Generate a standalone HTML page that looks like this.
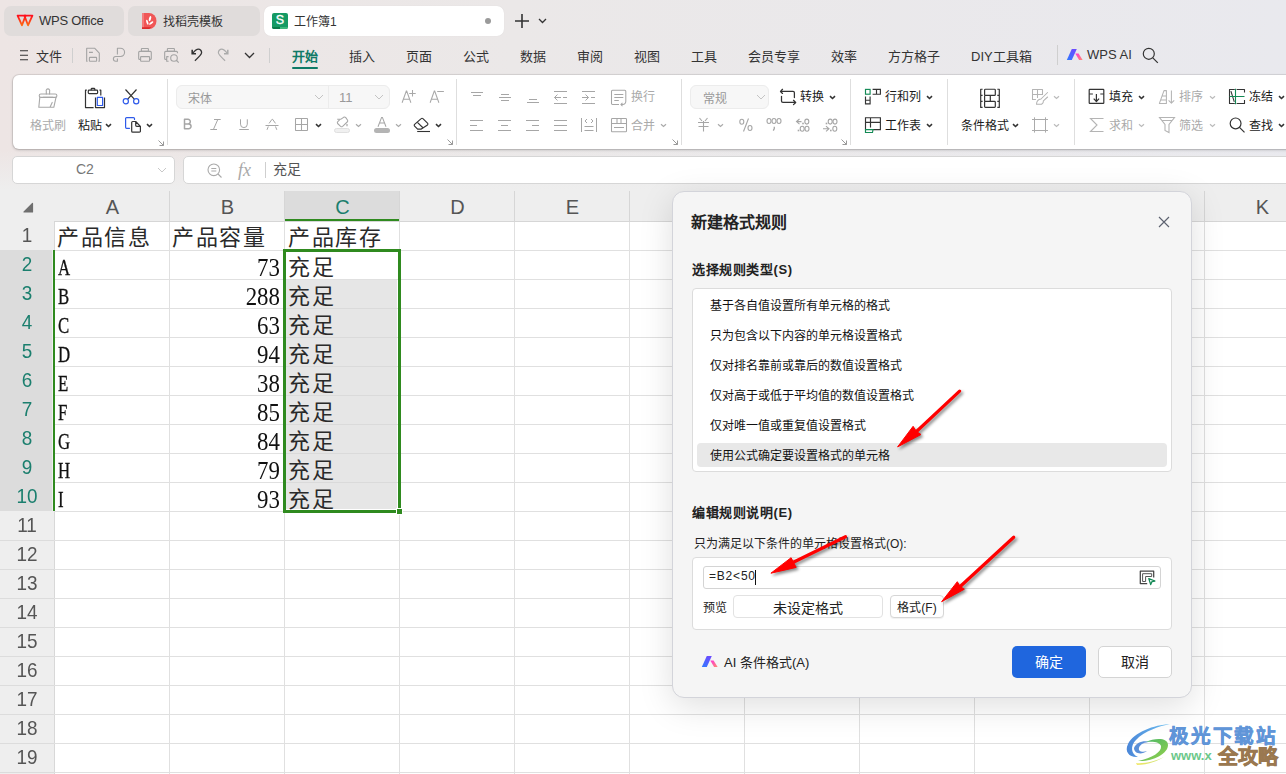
<!DOCTYPE html>
<html lang="zh-CN">
<head>
<meta charset="utf-8">
<style>
*{box-sizing:border-box;margin:0;padding:0}
html,body{width:1286px;height:774px;overflow:hidden}
body{position:relative;font-family:"Liberation Sans",sans-serif;color:#333;background:linear-gradient(90deg,#ede5e4 0%,#ebe8e8 40%,#e9e9ee 100%)}
.a{position:absolute}
.tab{position:absolute;top:6px;height:30px;border-radius:7px;background:#e0dcdb;font-size:13px;color:#333}
.tab span{position:absolute;top:7px;white-space:nowrap}
.menu{position:absolute;top:45.5px;font-size:13px;color:#333;white-space:nowrap}
#ribbon{position:absolute;left:13px;top:75px;width:1290px;height:74px;background:#fff;border-radius:6px;box-shadow:0 0 0 1px rgba(0,0,0,.08),0 1px 3px rgba(0,0,0,.22)}
.sep{position:absolute;top:79px;width:1px;height:66px;background:#dedede}
.lbl{position:absolute;font-size:12px;white-space:nowrap;color:#1a1a1a}
.dis{color:#aaa}
svg{position:absolute;overflow:visible}
#grid{position:absolute;left:0;top:188px;width:1286px;height:586px;background:#fff}
.ch{position:absolute;top:3px;height:30px;background:#eeeeee;border-right:1px solid #dcdcdc;font-size:19px;color:#555;text-align:center;line-height:30px}
.rh{position:absolute;left:0;width:54px;background:#efefef;font-size:19px;color:#555;text-align:center}
.cell{position:absolute;font-family:"Liberation Serif",serif;font-size:22px;color:#111;white-space:nowrap}
.cj{position:absolute;font-size:22px;line-height:29px;letter-spacing:1.5px;color:#2a2a2a;white-space:nowrap}
.lt{position:absolute;font-family:"Liberation Serif",serif;font-size:24px;line-height:29px;color:#111;-webkit-text-stroke:.35px #111;transform:scaleX(.7);transform-origin:0 0}
.num{position:absolute;width:112px;text-align:right;font-family:"Liberation Serif",serif;font-size:26px;line-height:29px;color:#111;transform:scaleX(.88);transform-origin:100% 0;left:169px}
.dl{position:absolute;left:710px;font-size:12px;color:#111;white-space:nowrap}
</style>
</head>
<body>
<!-- tabs -->
<div class="tab" style="left:4px;width:120px"><span style="left:35px;font-size:13px;top:7px;letter-spacing:-.25px">WPS Office</span></div>
<div class="tab" style="left:128px;width:132px"><span style="left:35px;font-size:12px;top:6px">找稻壳模板</span></div>
<div class="tab" style="left:264px;width:240px;background:#fff;box-shadow:0 0 1px rgba(0,0,0,.1)"><span style="left:30px;font-size:12px;top:6px">工作簿1</span></div>

<!-- tab icons -->
<svg style="left:15px;top:13px" width="20" height="15" viewBox="0 0 20 15"><defs><linearGradient id="wg" x1="0" y1="0" x2="0" y2="1"><stop offset="0" stop-color="#ff0f1f"/><stop offset="1" stop-color="#ff6a10"/></linearGradient></defs><g fill="none" stroke="url(#wg)" stroke-width="1.8" stroke-linejoin="round"><path d="M2.6 2.6H10.6L7 12.3Z"/><path d="M9.4 2.6H17.4L13 12.3Z"/></g></svg>
<svg style="left:141px;top:13px" width="16" height="16" viewBox="0 0 16 16"><path d="M1 0h7a7.5 8 0 0 1 0 16H1z" fill="#f05656"/><path d="M1 0h2v16H1z" fill="#f37c7c"/><path d="M1 14.2h9.5a7 7 0 0 1-2.5 1.8H1z" fill="#dc2b2b"/><ellipse cx="6.3" cy="9.2" rx=".95" ry="2.6" transform="rotate(-18 6.3 9.2)" fill="#fff"/><ellipse cx="9" cy="5.6" rx="1.05" ry="2.8" transform="rotate(16 9 5.6)" fill="#fff"/><ellipse cx="10.2" cy="10" rx=".95" ry="2.6" transform="rotate(52 10.2 10)" fill="#fff"/></svg>
<div class="a" style="left:272px;top:13px;width:16px;height:16px;background:#159a64;border-radius:2px;overflow:hidden"><div class="a" style="left:0;top:14px;width:8px;height:2px;background:#0b7a4a"></div><div class="a" style="left:8px;top:14px;width:8px;height:2px;background:#3db77b"></div><div class="a" style="left:0;top:-1px;width:16px;text-align:center;font-size:12.5px;color:#fff;-webkit-text-stroke:.35px #fff;line-height:17px">S</div></div>
<div class="a" style="left:485px;top:18px;width:6px;height:6px;border-radius:3px;background:#9a9a9a"></div>
<svg style="left:514px;top:13px" width="16" height="16" viewBox="0 0 16 16" fill="none" stroke="#333" stroke-width="1.6"><path d="M8 1v14M1 8h14"/></svg>
<svg style="left:538px;top:18px" width="9" height="6" viewBox="0 0 9 6" fill="none" stroke="#333" stroke-width="1.3"><path d="M1 1l3.5 3.5L8 1"/></svg>
<!-- menu icons -->
<svg style="left:19px;top:50px" width="10" height="11" viewBox="0 0 10 11" fill="none" stroke="#333" stroke-width="1.1"><path d="M1 .8h8M1 5.3h8M1 9.8h8"/></svg>
<div class="a" style="left:72px;top:48px;width:1px;height:15px;background:#cfcfcf"></div>
<div class="a" style="left:269px;top:48px;width:1px;height:15px;background:#cfcfcf"></div>
<div class="a" style="left:1057px;top:45px;width:1px;height:20px;background:#cfcfcf"></div>
<svg style="left:84px;top:46px" width="18" height="18" viewBox="0 0 18 18" fill="none" stroke="#a4a4a4" stroke-width="1.1" stroke-linejoin="round"><path d="M3.6 15.3H2.67V2.28H10.8L15.3 7.1V15.3H14.3M5 6.36H8.9"/><rect x="5.4" y="11.4" width="7.2" height="3.9" rx=".5"/></svg>
<svg style="left:111px;top:46px" width="18" height="18" viewBox="0 0 18 18" fill="none" stroke="#a4a4a4" stroke-width="1.1" stroke-linejoin="round"><path d="M6.4 8.5V2.28H9.5A4.08 4.08 0 0 1 9.5 10.44H4.8A2.43 2.43 0 0 0 4.8 15.3H6.4V12.4"/></svg>
<svg style="left:136px;top:46px" width="18" height="18" viewBox="0 0 18 18" fill="none" stroke="#a4a4a4" stroke-width="1.1" stroke-linejoin="round"><rect x="5.4" y="2.5" width="7" height="2.9" rx=".6"/><path d="M4.6 13.4H3.67a1 1 0 0 1-1-1V6.4a1 1 0 0 1 1-1H14.3a1 1 0 0 1 1 1V12.4a1 1 0 0 1-1 1H13.55"/><rect x="4.6" y="10.6" width="8.95" height="4.7" rx=".6"/></svg>
<svg style="left:162px;top:46px" width="18" height="18" viewBox="0 0 18 18" fill="none" stroke="#a4a4a4" stroke-width="1.1" stroke-linejoin="round"><rect x="5.4" y="2.5" width="7" height="2.9" rx=".6"/><path d="M4.3 13.4H3.67a1 1 0 0 1-1-1V6.4a1 1 0 0 1 1-1H14.5a1 1 0 0 1 1 1V7.3M6.6 10.6H4.7V15.3H6.6"/><circle cx="12" cy="12" r="3.3"/><path d="M14.6 14.5L16.7 16.7"/></svg>
<svg style="left:190px;top:47px" width="14" height="15" viewBox="0 0 14 15" fill="none" stroke="#333" stroke-width="1.3" stroke-linejoin="miter"><path d="M2.2 2.8V6.7H6" stroke-width="1.6"/><path d="M2.6 6.4C4.6 4 6.4 2.2 8.3 2.2C10.3 2.2 11.7 3.8 11.6 5.8C11.5 7.4 10.6 8.6 4.9 13.7"/></svg>
<svg style="left:216px;top:47px" width="14" height="15" viewBox="0 0 14 15" fill="none" stroke="#ababab" stroke-width="1.2"><g transform="translate(14 0) scale(-1 1)"><path d="M2.2 2.8V6.7H6" stroke-width="1.5"/><path d="M2.6 6.4C4.6 4 6.4 2.2 8.3 2.2C10.3 2.2 11.7 3.8 11.6 5.8C11.5 7.4 10.6 8.6 4.9 13.7"/></g></svg>
<svg style="left:244px;top:52px" width="11" height="7" viewBox="0 0 11 7" fill="none" stroke="#333" stroke-width="1.3"><path d="M1 1l4.5 4.5L10 1"/></svg>
<svg style="left:1066px;top:48px" width="18" height="13" viewBox="0 0 18 13"><defs><linearGradient id="wai" x1="0" y1="1" x2=".6" y2="0"><stop offset="0" stop-color="#2f7bff"/><stop offset="1" stop-color="#6a4dff"/></linearGradient><linearGradient id="wai2" x1="0" y1="0" x2="1" y2="1"><stop offset="0" stop-color="#ff34d6"/><stop offset="1" stop-color="#ff8a70"/></linearGradient></defs><path d="M.8 12L5.8 1h5L5.8 12z" fill="url(#wai)"/><path d="M9.3 5.6h3.3l4 6.4h-3.5z" fill="url(#wai2)"/></svg>
<svg style="left:1142px;top:47px" width="17" height="17" viewBox="0 0 17 17" fill="none" stroke="#333" stroke-width="1.2"><circle cx="6.8" cy="6.8" r="5.5"/><path d="M10.8 10.8l5 5"/></svg>
<!-- menu -->
<div class="menu" style="left:36px">文件</div>
<div class="menu" style="left:292px;color:#0f7a66;font-weight:bold">开始</div>
<div class="a" style="left:292px;top:67px;width:26px;height:2px;background:#0f7a66;border-radius:1px"></div>
<div class="menu" style="left:349px">插入</div>
<div class="menu" style="left:406px">页面</div>
<div class="menu" style="left:463px">公式</div>
<div class="menu" style="left:520px">数据</div>
<div class="menu" style="left:577px">审阅</div>
<div class="menu" style="left:634px">视图</div>
<div class="menu" style="left:691px">工具</div>
<div class="menu" style="left:748px">会员专享</div>
<div class="menu" style="left:831px">效率</div>
<div class="menu" style="left:888px">方方格子</div>
<div class="menu" style="left:971px">DIY工具箱</div>
<div class="menu" style="left:1087px;top:47px">WPS AI</div>

<!-- ribbon -->
<div id="ribbon"></div>
<!-- clipboard group -->
<svg style="left:36px;top:86px" width="24" height="24" viewBox="0 0 24 24" fill="none" stroke="#a8a8a8" stroke-width="1.1" stroke-linejoin="round" stroke-linecap="round"><path d="M10.3 8V5.4A1.8 1.8 0 1 1 13.6 5.4V8"/><rect x="3.2" y="8" width="17.7" height="3.4" rx="1.7"/><path d="M7.2 11.4H16.8M3.8 11.4L2.8 21.3H17.8L20 11.4M14 21.3L16.2 16.4"/></svg>
<div class="lbl dis" style="left:30px;top:116px">格式刷</div>
<svg style="left:83px;top:86px" width="24" height="24" viewBox="0 0 24 24" fill="none" stroke="#333" stroke-width="1.2" stroke-linejoin="round"><path d="M3.8 4.2H2.5V21.6H10.6M16.5 4.2H17.8V9.5M12.5 11.4V21.6H21.5V11.4"/><rect x="5.3" y="4.2" width="9.3" height="3.4" rx=".8"/><path d="M8.2 4.2V3.2a.8.8 0 0 1 .8-.8h2a.8.8 0 0 1 .8.8v1"/><rect x="14.3" y="11.4" width="5.3" height="8.1" stroke="#2f5bea"/></svg>
<div class="lbl" style="left:78px;top:116px">粘贴</div>
<svg style="left:121px;top:88px" width="20" height="18" viewBox="0 0 20 18" fill="none" stroke-width="1.2">
<path d="M4.5 1.5l9 9.8M15.5 1.5l-9 9.8" stroke="#333"/>
<circle cx="4.8" cy="13.3" r="2.6" stroke="#2f5bea"/><circle cx="15.2" cy="13.3" r="2.6" stroke="#2f5bea"/>
</svg>
<svg style="left:123px;top:116px" width="20" height="18" viewBox="0 0 20 18" fill="none" stroke-width="1.2" stroke-linejoin="round" stroke-linecap="round"><path d="M11.5 3.5V2.6a1 1 0 0 0-1-1H3.6a1 1 0 0 0-1 1V11.3a1 1 0 0 0 1 1H6.5" stroke="#2f5bea"/><path d="M9.7 5.5H12.7L17.4 10.3V15.2a1 1 0 0 1-1 1H9.7a1 1 0 0 1-1-1V6.5a1 1 0 0 1 1-1ZM12.7 5.5V9.3a1 1 0 0 0 1 1H17.4" stroke="#333"/></svg>
<div class="sep" style="left:167px"></div>
<!-- font group -->
<div class="a" style="left:176px;top:85px;width:214px;height:24px;background:#f7f7f7;border:1px solid #ececec;border-radius:6px"></div>
<div class="a" style="left:328px;top:86px;width:1px;height:22px;background:#ececec"></div>
<div class="lbl" style="left:188px;top:89px;color:#999">宋体</div>
<div class="lbl" style="left:339px;top:90px;color:#999;font-size:13px">11</div>
<svg style="left:314px;top:94px" width="10" height="6" viewBox="0 0 10 6" fill="none" stroke="#c4c4c4" stroke-width="1"><path d="M1 1l4 4 4-4"/></svg>
<svg style="left:374px;top:94px" width="10" height="6" viewBox="0 0 10 6" fill="none" stroke="#c4c4c4" stroke-width="1"><path d="M1 1l4 4 4-4"/></svg>
<svg style="left:401px;top:89px" width="16" height="16" viewBox="0 0 16 16" fill="none" stroke="#a8a8a8" stroke-width="1.05"><path d="M1.1 13.7L5.3 2.1h.4L9.9 13.7M2.6 10.3h5.8M8.2 4.5h6.5M11.5 1.1v6.5"/></svg>
<svg style="left:429px;top:89px" width="16" height="16" viewBox="0 0 16 16" fill="none" stroke="#a8a8a8" stroke-width="1.05"><path d="M1.1 13.7L5.3 2.1h.4L9.9 13.7M2.6 10.3h5.8M8.2 2.5h6.7"/></svg>


<svg style="left:105px;top:123px" width="7" height="5" viewBox="0 0 7 5" fill="none" stroke="#333" stroke-width="1.6"><path d="M1 1.2l2.5 2.3L6 1.2"/></svg>
<svg style="left:146px;top:123px" width="7" height="5" viewBox="0 0 7 5" fill="none" stroke="#333" stroke-width="1.6"><path d="M1 1.2l2.5 2.3L6 1.2"/></svg>
<svg style="left:158px;top:140px" width="6" height="6" viewBox="0 0 6 6" fill="none" stroke="#999" stroke-width="1"><path d="M.5 .5l5 5M1.5 5.5h4v-4"/></svg>
<svg style="left:183px;top:118px" width="10" height="13" viewBox="0 0 10 13" fill="none" stroke="#a6a6a6" stroke-width="1.5" stroke-linejoin="round"><path d="M1.5 1.3H5A2.3 2.3 0 0 1 5 5.9H1.5ZM1.5 5.9H5.6A2.4 2.4 0 0 1 5.6 10.8H1.5Z"/></svg>
<svg style="left:209px;top:118px" width="13" height="13" viewBox="0 0 13 13" fill="none" stroke="#a6a6a6" stroke-width="1"><path d="M5 1.5h6.7M1.3 11.5h6.7M8.8 1.5L4.4 11.5"/></svg>
<svg style="left:238px;top:118px" width="12" height="13" viewBox="0 0 12 13" fill="none" stroke="#a6a6a6" stroke-width="1"><path d="M2.5 1.3v4.9a3.4 3.4 0 0 0 6.8 0V1.3M1.3 11.5h9.5"/></svg>
<svg style="left:264px;top:118px" width="16" height="13" viewBox="0 0 16 13" fill="none" stroke="#a6a6a6" stroke-width="1"><path d="M5.1 5.4L8 1.3h.6l2.9 4.1M1.5 7.5h13M3 11.8l1.3-3.3M12.8 11.8l-1.3-3.3"/></svg>
<svg style="left:294px;top:117px" width="15" height="15" viewBox="0 0 15 15" fill="none" stroke="#a6a6a6" stroke-width="1.05"><rect x="1.5" y="1.5" width="12" height="12" rx=".5"/><path d="M7.5 1.5v12M1.5 7.5h12"/></svg>
<svg style="left:315px;top:123px" width="7" height="5" viewBox="0 0 7 5" fill="none" stroke="#333" stroke-width="1.6"><path d="M1 1.2l2.5 2.3L6 1.2"/></svg>
<svg style="left:330px;top:112px" width="22" height="22" viewBox="330 112 22 22" fill="none" stroke="#a6a6a6" stroke-width="1.05" stroke-linejoin="round"><path d="M337.2 119.2H341L343.6 117.3Q344.8 116.6 345.8 117.6L347.6 120.2Q348.1 121.2 347.2 122L342.6 126.3Q341.6 127.1 340.6 126.3L337.6 123.5Q336.9 122.6 337.8 121.6L339.6 119.8"/><path d="M347 124v2.2" stroke-width="1.2"/></svg>
<div class="a" style="left:334px;top:128px;width:16px;height:5px;border:1px solid #e0e0e0;background:#f0f0f0;border-radius:2.5px"></div>
<svg style="left:355px;top:123px" width="7" height="5" viewBox="0 0 7 5" fill="none" stroke="#aaa" stroke-width="1.2"><path d="M1 1.2l2.5 2.3L6 1.2"/></svg>
<svg style="left:376px;top:116px" width="12" height="12" viewBox="0 0 12 12" fill="none" stroke="#a6a6a6" stroke-width="1.05"><path d="M2 10.8L5.6 1.4h.8L10 10.8M3.6 7h4.8" /></svg>
<div class="a" style="left:374px;top:128px;width:16px;height:5px;background:#b4b4b4;border-radius:2.5px"></div>
<svg style="left:395px;top:123px" width="7" height="5" viewBox="0 0 7 5" fill="none" stroke="#aaa" stroke-width="1.2"><path d="M1 1.2l2.5 2.3L6 1.2"/></svg>
<svg style="left:412px;top:116px" width="20" height="18" viewBox="0 0 20 18" fill="none" stroke="#333" stroke-width="1.15" stroke-linejoin="round"><path d="M9.2 2.6a1.2 1.2 0 0 1 1.7 0l4.6 4.6a1.2 1.2 0 0 1 0 1.7L9.3 13.1H5.6L2.6 10.1a1.2 1.2 0 0 1 0-1.7z"/><path d="M5.4 6.3L11.2 12"/><path d="M5.2 15.5H18" stroke-width="1.1"/></svg>
<svg style="left:435px;top:123px" width="7" height="5" viewBox="0 0 7 5" fill="none" stroke="#333" stroke-width="1.6"><path d="M1 1.2l2.5 2.3L6 1.2"/></svg>
<svg style="left:447px;top:139px" width="6" height="6" viewBox="0 0 6 6" fill="none" stroke="#999" stroke-width="1"><path d="M.5 .5l5 5M1.5 5.5h4v-4"/></svg>
<div class="sep" style="left:456px"></div>
<svg style="left:470px;top:85px" width="20" height="20" viewBox="0 0 20 20" fill="none" stroke="#a6a6a6" stroke-width="1"><path d="M1 7.5H13M3 10.5H11"/></svg>
<svg style="left:498px;top:85px" width="20" height="20" viewBox="0 0 20 20" fill="none" stroke="#a6a6a6" stroke-width="1"><path d="M1 12.5H13M3 9.5H11M3 15.5H11"/></svg>
<svg style="left:526px;top:85px" width="20" height="20" viewBox="0 0 20 20" fill="none" stroke="#a6a6a6" stroke-width="1"><path d="M1 17.5H13M3 14.5H11"/></svg>
<svg style="left:553px;top:85px" width="16" height="20" viewBox="0 0 16 20" fill="none" stroke="#a6a6a6" stroke-width="1"><path d="M1 6.5H14M1 18.5H14M1.5 12.5H8M4.5 9.5L1.5 12.5l3 3M10 12.5h4"/></svg>
<svg style="left:581px;top:85px" width="16" height="20" viewBox="0 0 16 20" fill="none" stroke="#a6a6a6" stroke-width="1"><path d="M1 6.5H14M1 18.5H14M1 12.5H7.5M4.5 9.5l3 3-3 3M10 12.5h4"/></svg>
<svg style="left:469px;top:113px" width="20" height="20" viewBox="0 0 20 20" fill="none" stroke="#a6a6a6" stroke-width="1"><path d="M1 7.5H14M1 12.5H8M1 17.5H14"/></svg>
<svg style="left:497px;top:113px" width="20" height="20" viewBox="0 0 20 20" fill="none" stroke="#a6a6a6" stroke-width="1"><path d="M1 7.5H14M4 12.5H11M1 17.5H14"/></svg>
<svg style="left:525px;top:113px" width="20" height="20" viewBox="0 0 20 20" fill="none" stroke="#a6a6a6" stroke-width="1"><path d="M1 7.5H14M7 12.5H14M1 17.5H14"/></svg>
<svg style="left:553px;top:113px" width="20" height="20" viewBox="0 0 20 20" fill="none" stroke="#a6a6a6" stroke-width="1"><path d="M1 7.5H14M1 12.5H14M1 17.5H14"/></svg>
<svg style="left:580px;top:117px" width="18" height="16" viewBox="0 0 18 16" fill="none" stroke="#a6a6a6" stroke-width="1"><path d="M1.5 1v14M16.5 1v14M7 2L5 4l2 2M11 2l2 2-2 2M4.5 9.5h9M4.5 13.5h9"/></svg>
<svg style="left:610px;top:89px" width="18" height="17" viewBox="0 0 18 17" fill="none" stroke="#a6a6a6" stroke-width="1.05" stroke-linejoin="round"><path d="M9 15.5H2.5a1 1 0 0 1-1-1V2.3a1 1 0 0 1 1-1h12.3a1 1 0 0 1 1 1V12.5a3 3 0 0 1-3 3h-1.5M12.5 13.8l-1.7 1.7 1.7 1.7"/><path d="M4.3 5.5h9M4.3 8.5h9M4.3 11.5h4.5"/></svg>
<svg style="left:610px;top:117px" width="18" height="16" viewBox="0 0 18 16" fill="none" stroke="#a6a6a6" stroke-width="1.05"><rect x="1.5" y="1.5" width="15" height="13.3" rx=".8"/><path d="M1.5 6.5h15M7 1.5v5M11 1.5v5M4 10.5h10"/></svg>
<div class="lbl dis" style="left:631px;top:87px">换行</div>
<div class="lbl dis" style="left:631px;top:116px">合并</div>
<svg style="left:660px;top:123px" width="7" height="5" viewBox="0 0 7 5" fill="none" stroke="#aaa" stroke-width="1.2"><path d="M1 1.2l2.5 2.3L6 1.2"/></svg>
<svg style="left:672px;top:139px" width="6" height="6" viewBox="0 0 6 6" fill="none" stroke="#999" stroke-width="1"><path d="M.5 .5l5 5M1.5 5.5h4v-4"/></svg>
<div class="sep" style="left:681px"></div>
<div class="a" style="left:690px;top:85px;width:79px;height:24px;background:#f7f7f7;border:1px solid #ececec;border-radius:6px"></div>
<div class="lbl" style="left:703px;top:89px;color:#999">常规</div>
<svg style="left:756px;top:94px" width="10" height="6" viewBox="0 0 10 6" fill="none" stroke="#c4c4c4" stroke-width="1"><path d="M1 1l4 4 4-4"/></svg>
<svg style="left:778px;top:86px" width="20" height="20" viewBox="0 0 20 20" fill="none" stroke="#333" stroke-width="1.25" stroke-linecap="round" stroke-linejoin="round"><path d="M4.5 3.3L2.5 5.44L4.5 7.46M2.5 5.44H15Q16.4 5.44 16.4 6.84V11.5M3.5 10.25V15Q3.5 16.45 4.9 16.45H17.7M15.5 14.3L17.7 16.45L15.5 18.6"/></svg>
<div class="lbl" style="left:800px;top:87px">转换</div>
<svg style="left:829px;top:95px" width="7" height="5" viewBox="0 0 7 5" fill="none" stroke="#333" stroke-width="1.6"><path d="M1 1.2l2.5 2.3L6 1.2"/></svg>
<svg style="left:697px;top:117px" width="13" height="15" viewBox="0 0 13 15" fill="none" stroke="#a6a6a6" stroke-width="1.1"><path d="M2.5 1l2.5 3M10.5 1L8 4M1 5.5h11M1.5 9.5h10M6.5 4v10.5"/></svg>
<svg style="left:717px;top:123px" width="7" height="5" viewBox="0 0 7 5" fill="none" stroke="#aaa" stroke-width="1.2"><path d="M1 1.2l2.5 2.3L6 1.2"/></svg>
<svg style="left:0;top:0" width="1286" height="200" viewBox="0 0 1286 200" fill="none" stroke="#a6a6a6" stroke-width="1.1"><ellipse cx="741.8" cy="121.8" rx="2" ry="2.5"/><ellipse cx="750" cy="128" rx="2" ry="2.5"/><path d="M748.5 118.5L743.5 131.5"/><ellipse cx="769" cy="121" rx="2" ry="2.5"/><ellipse cx="774" cy="121" rx="2" ry="2.5"/><ellipse cx="779" cy="121" rx="2" ry="2.5"/><path d="M774.3 126.8v1.8l-1 2" stroke-width="1.3"/><path d="M799.5 119l-3 2.6 3 2.6M796.5 121.6h5"/><rect x="802.2" y="122.7" width="1.6" height="1.6" fill="#a6a6a6" stroke="none"/><ellipse cx="806.8" cy="121.6" rx="2" ry="2.5"/><rect x="797.7" y="129.7" width="1.6" height="1.6" fill="#a6a6a6" stroke="none"/><ellipse cx="802.2" cy="128.8" rx="2" ry="2.5"/><ellipse cx="807" cy="128.8" rx="2" ry="2.5"/><rect x="825.7" y="122.7" width="1.6" height="1.6" fill="#a6a6a6" stroke="none"/><ellipse cx="830.2" cy="121.6" rx="2" ry="2.5"/><ellipse cx="835" cy="121.6" rx="2" ry="2.5"/><path d="M826 126.2l3 2.6-3 2.6M823 128.8h5.5"/><rect x="830.0" y="129.7" width="1.6" height="1.6" fill="#a6a6a6" stroke="none"/><ellipse cx="834.8" cy="128.8" rx="2" ry="2.5"/></svg>
<svg style="left:841px;top:139px" width="6" height="6" viewBox="0 0 6 6" fill="none" stroke="#999" stroke-width="1"><path d="M.5 .5l5 5M1.5 5.5h4v-4"/></svg>
<div class="sep" style="left:850px"></div>
<svg style="left:864px;top:88px" width="18" height="18" viewBox="0 0 18 18" fill="none" stroke-width="1.15"><rect x="1.5" y="1.4" width="4.6" height="4.8" stroke="#138a55"/><path d="M8.6 1.4H16.4V6.2H8.6M12.5 1.4V6.2M1.5 8.6V15.8H6.1V8.6M1.5 12.2H6.1" stroke="#333"/></svg>
<div class="lbl" style="left:885px;top:87px">行和列</div>
<svg style="left:864px;top:116px" width="18" height="18" viewBox="0 0 18 18" fill="none" stroke-width="1.15"><path d="M1.5 13.6V1.7H16.4V13.6H9M1.5 6.3H16.4M6.5 1.7V11.5" stroke="#333"/><path d="M1.5 13.6V16.5H8.5L9 13.6Z" stroke="#138a55"/></svg>
<div class="lbl" style="left:885px;top:116px">工作表</div>
<svg style="left:926px;top:95px" width="7" height="5" viewBox="0 0 7 5" fill="none" stroke="#333" stroke-width="1.6"><path d="M1 1.2l2.5 2.3L6 1.2"/></svg>
<svg style="left:926px;top:123px" width="7" height="5" viewBox="0 0 7 5" fill="none" stroke="#333" stroke-width="1.6"><path d="M1 1.2l2.5 2.3L6 1.2"/></svg>
<div class="sep" style="left:947px"></div>
<svg style="left:978px;top:88px" width="23" height="21" viewBox="0 0 23 21" fill="none" stroke="#333" stroke-width="1.2" stroke-linejoin="round"><path d="M4.6 1.25H2.7V19.4H4.6M2.7 7.45H4.6M2.7 13.4H4.6M19.3 1.25H21.3V19.4H19.3M21.3 7.45H19.3M21.3 13.4H19.3"/><rect x="6.6" y="1.25" width="10.7" height="6.2" rx=".8"/><rect x="6.6" y="13.4" width="10.7" height="6" rx=".8"/><path d="M6.6 7.45V13.4M12.3 7.45V13.4"/></svg>
<div class="lbl" style="left:961px;top:116px">条件格式</div>
<svg style="left:1012px;top:123px" width="7" height="5" viewBox="0 0 7 5" fill="none" stroke="#333" stroke-width="1.6"><path d="M1 1.2l2.5 2.3L6 1.2"/></svg>
<svg style="left:1030px;top:87px" width="20" height="20" viewBox="0 0 20 20" fill="none" stroke="#b4b4b4" stroke-width="1.05" stroke-linejoin="round" stroke-linecap="round"><path d="M2.5 12.4V2.5H12.5V7.4H2.5M7.5 2.5V10.4M2.5 12.4H5.5"/><path d="M17.6 5.5L11 12M17.6 10L13.4 13.8M11 12C8.3 12.3 6.6 14 6.5 17.2H11.6C13 16.2 13.6 15 13.4 13.8"/></svg>
<svg style="left:1031px;top:116px" width="18" height="18" viewBox="0 0 18 18" fill="none" stroke="#ababab" stroke-width="1"><path d="M1 3.5h16M1 14.5h16M3.5 1.3v15.3M14.5 1.3v15.3"/></svg>
<svg style="left:1053px;top:95px" width="7" height="5" viewBox="0 0 7 5" fill="none" stroke="#bbb" stroke-width="1.2"><path d="M1 1.2l2.5 2.3L6 1.2"/></svg>
<svg style="left:1053px;top:123px" width="7" height="5" viewBox="0 0 7 5" fill="none" stroke="#bbb" stroke-width="1.2"><path d="M1 1.2l2.5 2.3L6 1.2"/></svg>
<div class="sep" style="left:1074px"></div>
<svg style="left:1088px;top:88px" width="17" height="17" viewBox="0 0 17 17" fill="none" stroke="#333" stroke-width="1.2" stroke-linejoin="round"><rect x="1.2" y="1.4" width="14.6" height="14" rx=".6"/><path d="M1.2 6H4.9M12.3 6H15.8M8.4 6V13.5M5.7 10.7L8.4 13.5L11.1 10.7"/></svg>
<div class="lbl" style="left:1109px;top:87px">填充</div>
<svg style="left:1158px;top:88px" width="18" height="17" viewBox="0 0 18 17" fill="none" stroke="#b4b4b4" stroke-width="1.05" stroke-linejoin="round"><path d="M1.4 15.4L6 2.6H8.4V15.4ZM4 8H8.4M2.9 12H8.4M13.4 2.6V15.2M10.6 12.4L13.4 15.2L16.2 12.4"/></svg>
<div class="lbl dis" style="left:1179px;top:87px">排序</div>
<svg style="left:1228px;top:88px" width="18" height="17" viewBox="0 0 18 17" fill="none" stroke-width="1.1" stroke-linejoin="round"><path d="M6.8 1.5H1.5V15.5H6.8M8.6 1.5H16.5V4.5M16.5 12V15.5H8.6M2.9 3.2L6.3 13.8" stroke="#333"/><path d="M7.5 .8V16.2M1.5 8.5H16.5" stroke="#138a55"/></svg>
<div class="lbl" style="left:1249px;top:87px">冻结</div>
<svg style="left:1089px;top:117px" width="16" height="16" viewBox="0 0 16 16" fill="none" stroke="#b4b4b4" stroke-width="1.1"><path d="M14.5 1.5H1.5L8 8l-6.5 6.5h13"/></svg>
<div class="lbl dis" style="left:1109px;top:116px">求和</div>
<svg style="left:1158px;top:116px" width="18" height="18" viewBox="0 0 18 18" fill="none" stroke="#b4b4b4" stroke-width="1.1"><path d="M1.5 1.5h15L11 8.5v8l-4-2V8.5zM1.5 1.5L4 4.5h10"/></svg>
<div class="lbl dis" style="left:1179px;top:116px">筛选</div>
<svg style="left:1228px;top:116px" width="18" height="18" viewBox="0 0 18 18" fill="none" stroke="#333" stroke-width="1.2"><circle cx="7.6" cy="7.4" r="5.4"/><path d="M11.5 11.3l5 5"/></svg>
<div class="lbl" style="left:1249px;top:116px">查找</div>
<svg style="left:1138px;top:95px" width="7" height="5" viewBox="0 0 7 5" fill="none" stroke="#333" stroke-width="1.6"><path d="M1 1.2l2.5 2.3L6 1.2"/></svg>
<svg style="left:1209px;top:95px" width="7" height="5" viewBox="0 0 7 5" fill="none" stroke="#bbb" stroke-width="1.2"><path d="M1 1.2l2.5 2.3L6 1.2"/></svg>
<svg style="left:1278px;top:95px" width="7" height="5" viewBox="0 0 7 5" fill="none" stroke="#333" stroke-width="1.6"><path d="M1 1.2l2.5 2.3L6 1.2"/></svg>
<svg style="left:1138px;top:123px" width="7" height="5" viewBox="0 0 7 5" fill="none" stroke="#bbb" stroke-width="1.2"><path d="M1 1.2l2.5 2.3L6 1.2"/></svg>
<svg style="left:1209px;top:123px" width="7" height="5" viewBox="0 0 7 5" fill="none" stroke="#bbb" stroke-width="1.2"><path d="M1 1.2l2.5 2.3L6 1.2"/></svg>
<svg style="left:1278px;top:123px" width="7" height="5" viewBox="0 0 7 5" fill="none" stroke="#333" stroke-width="1.6"><path d="M1 1.2l2.5 2.3L6 1.2"/></svg>

<!-- formula bar -->
<div class="a" style="left:150px;top:150px;width:1px;height:1px"></div><div class="a" style="left:0;top:150px;width:1286px;height:40px;background:linear-gradient(180deg,rgba(238,238,238,0) 0%,rgba(238,238,238,.5) 50%,#eeeeee 100%)"></div><div class="a" style="left:12px;top:156px;width:163px;height:28px;background:#fff;border:1px solid #d6d6d6;border-radius:5px"></div>
<div class="a" style="left:183px;top:156px;width:1110px;height:28px;background:#fff;border:1px solid #d6d6d6;border-radius:5px"></div>
<div class="a" style="left:76px;top:161px;font-size:14px;color:#777">C2</div>
<div class="a" style="left:273px;top:158px;font-size:14px;color:#555">充足</div>

<!-- formula icons -->
<svg style="left:157px;top:167px" width="10" height="6" viewBox="0 0 10 6" fill="none" stroke="#c8c8c8" stroke-width="1"><path d="M1 1l4 4 4-4"/></svg>
<svg style="left:207px;top:163px" width="16" height="15" viewBox="0 0 16 15" fill="none" stroke="#aaa" stroke-width="1.1"><circle cx="6.8" cy="6.8" r="5.8"/><path d="M4.3 5.5h5M4.3 8h5M11 11l3.5 3.5"/></svg>
<div class="a" style="left:238px;top:160px;font-family:'Liberation Serif',serif;font-style:italic;font-size:18px;color:#a8a8a8">fx</div>
<div class="a" style="left:265px;top:162px;width:1px;height:16px;background:#cfcfcf"></div>
<!-- grid -->
<div class="a" style="left:0;top:190px;width:1286px;height:584px;background:#eeeeee"></div>
<div class="a" style="left:54px;top:221px;width:1232px;height:553px;background:#fff"></div>
<div class="a" style="left:0;top:250px;width:52px;height:261px;background:#dcdcdc"></div>
<div class="a" style="left:284px;top:191px;width:115px;height:30px;background:#dcdcdc"></div>
<div class="a" style="left:284px;top:219px;width:115px;height:2px;background:#2f8a1f"></div>
<div class="a" style="left:169px;top:191px;width:1px;height:583px;background:#e0e0e0"></div>
<div class="a" style="left:284px;top:191px;width:1px;height:583px;background:#e0e0e0"></div>
<div class="a" style="left:399px;top:191px;width:1px;height:583px;background:#e0e0e0"></div>
<div class="a" style="left:514px;top:191px;width:1px;height:583px;background:#e0e0e0"></div>
<div class="a" style="left:629px;top:191px;width:1px;height:583px;background:#e0e0e0"></div>
<div class="a" style="left:744px;top:191px;width:1px;height:583px;background:#e0e0e0"></div>
<div class="a" style="left:859px;top:191px;width:1px;height:583px;background:#e0e0e0"></div>
<div class="a" style="left:974px;top:191px;width:1px;height:583px;background:#e0e0e0"></div>
<div class="a" style="left:1089px;top:191px;width:1px;height:583px;background:#e0e0e0"></div>
<div class="a" style="left:1204px;top:191px;width:1px;height:583px;background:#e0e0e0"></div>
<div class="a" style="left:54px;top:221px;width:1px;height:553px;background:#d8d8d8"></div>
<div class="a" style="left:169px;top:191px;width:1px;height:30px;background:#d6d6d6"></div>
<div class="a" style="left:284px;top:191px;width:1px;height:30px;background:#d6d6d6"></div>
<div class="a" style="left:399px;top:191px;width:1px;height:30px;background:#d6d6d6"></div>
<div class="a" style="left:514px;top:191px;width:1px;height:30px;background:#d6d6d6"></div>
<div class="a" style="left:629px;top:191px;width:1px;height:30px;background:#d6d6d6"></div>
<div class="a" style="left:744px;top:191px;width:1px;height:30px;background:#d6d6d6"></div>
<div class="a" style="left:859px;top:191px;width:1px;height:30px;background:#d6d6d6"></div>
<div class="a" style="left:974px;top:191px;width:1px;height:30px;background:#d6d6d6"></div>
<div class="a" style="left:1089px;top:191px;width:1px;height:30px;background:#d6d6d6"></div>
<div class="a" style="left:1204px;top:191px;width:1px;height:30px;background:#d6d6d6"></div>
<div class="a" style="left:54px;top:221px;width:1232px;height:1px;background:#e0e0e0"></div>
<div class="a" style="left:54px;top:250px;width:1232px;height:1px;background:#e0e0e0"></div>
<div class="a" style="left:54px;top:279px;width:1232px;height:1px;background:#e0e0e0"></div>
<div class="a" style="left:54px;top:308px;width:1232px;height:1px;background:#e0e0e0"></div>
<div class="a" style="left:54px;top:337px;width:1232px;height:1px;background:#e0e0e0"></div>
<div class="a" style="left:54px;top:366px;width:1232px;height:1px;background:#e0e0e0"></div>
<div class="a" style="left:54px;top:395px;width:1232px;height:1px;background:#e0e0e0"></div>
<div class="a" style="left:54px;top:424px;width:1232px;height:1px;background:#e0e0e0"></div>
<div class="a" style="left:54px;top:453px;width:1232px;height:1px;background:#e0e0e0"></div>
<div class="a" style="left:54px;top:482px;width:1232px;height:1px;background:#e0e0e0"></div>
<div class="a" style="left:54px;top:511px;width:1232px;height:1px;background:#e0e0e0"></div>
<div class="a" style="left:54px;top:540px;width:1232px;height:1px;background:#e0e0e0"></div>
<div class="a" style="left:54px;top:569px;width:1232px;height:1px;background:#e0e0e0"></div>
<div class="a" style="left:54px;top:598px;width:1232px;height:1px;background:#e0e0e0"></div>
<div class="a" style="left:54px;top:627px;width:1232px;height:1px;background:#e0e0e0"></div>
<div class="a" style="left:54px;top:656px;width:1232px;height:1px;background:#e0e0e0"></div>
<div class="a" style="left:54px;top:685px;width:1232px;height:1px;background:#e0e0e0"></div>
<div class="a" style="left:54px;top:714px;width:1232px;height:1px;background:#e0e0e0"></div>
<div class="a" style="left:54px;top:743px;width:1232px;height:1px;background:#e0e0e0"></div>
<div class="a" style="left:54px;top:772px;width:1232px;height:1px;background:#e0e0e0"></div>
<div class="a" style="left:54px;top:221px;width:1232px;height:1px;background:#d6d6d6"></div>
<div class="a" style="left:286px;top:280px;width:111px;height:229px;background:#e6e6e6"></div>
<div class="a" style="left:286px;top:308px;width:111px;height:1px;background:#dadada"></div>
<div class="a" style="left:286px;top:337px;width:111px;height:1px;background:#dadada"></div>
<div class="a" style="left:286px;top:366px;width:111px;height:1px;background:#dadada"></div>
<div class="a" style="left:286px;top:395px;width:111px;height:1px;background:#dadada"></div>
<div class="a" style="left:286px;top:424px;width:111px;height:1px;background:#dadada"></div>
<div class="a" style="left:286px;top:453px;width:111px;height:1px;background:#dadada"></div>
<div class="a" style="left:286px;top:482px;width:111px;height:1px;background:#dadada"></div>
<div class="a" style="left:0;top:540px;width:54px;height:1px;background:#dcdcdc"></div>
<div class="a" style="left:0;top:569px;width:54px;height:1px;background:#dcdcdc"></div>
<div class="a" style="left:0;top:598px;width:54px;height:1px;background:#dcdcdc"></div>
<div class="a" style="left:0;top:627px;width:54px;height:1px;background:#dcdcdc"></div>
<div class="a" style="left:0;top:656px;width:54px;height:1px;background:#dcdcdc"></div>
<div class="a" style="left:0;top:685px;width:54px;height:1px;background:#dcdcdc"></div>
<div class="a" style="left:0;top:714px;width:54px;height:1px;background:#dcdcdc"></div>
<div class="a" style="left:0;top:743px;width:54px;height:1px;background:#dcdcdc"></div>
<div class="a" style="left:0;top:772px;width:54px;height:1px;background:#dcdcdc"></div>
<div class="a" style="left:53px;top:250px;width:2px;height:261px;background:#2f8a1f"></div>
<div class="a" style="left:283px;top:249px;width:118px;height:264px;border:3px solid #2f8a1f"></div>
<div class="a" style="left:396px;top:508px;width:7px;height:7px;background:#fff"></div>
<div class="a" style="left:397px;top:509px;width:5px;height:5px;background:#2f8a1f"></div>
<svg style="left:23px;top:202px" width="11" height="11" viewBox="0 0 11 11"><path d="M9.5 1.5v8.5H1z" fill="#6f6f6f" stroke="#6f6f6f" stroke-width="1.2" stroke-linejoin="round"/></svg>
<div class="a" style="left:55px;top:192px;width:115px;height:30px;line-height:30px;text-align:center;font-size:20px;color:#555">A</div>
<div class="a" style="left:170px;top:192px;width:115px;height:30px;line-height:30px;text-align:center;font-size:20px;color:#555">B</div>
<div class="a" style="left:285px;top:192px;width:115px;height:30px;line-height:30px;text-align:center;font-size:20px;color:#1b7f6e">C</div>
<div class="a" style="left:400px;top:192px;width:115px;height:30px;line-height:30px;text-align:center;font-size:20px;color:#555">D</div>
<div class="a" style="left:515px;top:192px;width:115px;height:30px;line-height:30px;text-align:center;font-size:20px;color:#555">E</div>
<div class="a" style="left:630px;top:192px;width:115px;height:30px;line-height:30px;text-align:center;font-size:20px;color:#555">F</div>
<div class="a" style="left:745px;top:192px;width:115px;height:30px;line-height:30px;text-align:center;font-size:20px;color:#555">G</div>
<div class="a" style="left:860px;top:192px;width:115px;height:30px;line-height:30px;text-align:center;font-size:20px;color:#555">H</div>
<div class="a" style="left:975px;top:192px;width:115px;height:30px;line-height:30px;text-align:center;font-size:20px;color:#555">I</div>
<div class="a" style="left:1090px;top:192px;width:115px;height:30px;line-height:30px;text-align:center;font-size:20px;color:#555">J</div>
<div class="a" style="left:1205px;top:192px;width:115px;height:30px;line-height:30px;text-align:center;font-size:20px;color:#555">K</div>
<div class="a" style="left:0;top:220px;width:54px;height:29px;line-height:29px;text-align:center;font-size:21px;transform:scaleX(.9);color:#555">1</div>
<div class="a" style="left:0;top:249px;width:54px;height:29px;line-height:29px;text-align:center;font-size:21px;transform:scaleX(.9);color:#1b7f6e">2</div>
<div class="a" style="left:0;top:278px;width:54px;height:29px;line-height:29px;text-align:center;font-size:21px;transform:scaleX(.9);color:#1b7f6e">3</div>
<div class="a" style="left:0;top:307px;width:54px;height:29px;line-height:29px;text-align:center;font-size:21px;transform:scaleX(.9);color:#1b7f6e">4</div>
<div class="a" style="left:0;top:336px;width:54px;height:29px;line-height:29px;text-align:center;font-size:21px;transform:scaleX(.9);color:#1b7f6e">5</div>
<div class="a" style="left:0;top:365px;width:54px;height:29px;line-height:29px;text-align:center;font-size:21px;transform:scaleX(.9);color:#1b7f6e">6</div>
<div class="a" style="left:0;top:394px;width:54px;height:29px;line-height:29px;text-align:center;font-size:21px;transform:scaleX(.9);color:#1b7f6e">7</div>
<div class="a" style="left:0;top:423px;width:54px;height:29px;line-height:29px;text-align:center;font-size:21px;transform:scaleX(.9);color:#1b7f6e">8</div>
<div class="a" style="left:0;top:452px;width:54px;height:29px;line-height:29px;text-align:center;font-size:21px;transform:scaleX(.9);color:#1b7f6e">9</div>
<div class="a" style="left:0;top:481px;width:54px;height:29px;line-height:29px;text-align:center;font-size:21px;transform:scaleX(.9);color:#1b7f6e">10</div>
<div class="a" style="left:0;top:510px;width:54px;height:29px;line-height:29px;text-align:center;font-size:21px;transform:scaleX(.9);color:#555">11</div>
<div class="a" style="left:0;top:539px;width:54px;height:29px;line-height:29px;text-align:center;font-size:21px;transform:scaleX(.9);color:#555">12</div>
<div class="a" style="left:0;top:568px;width:54px;height:29px;line-height:29px;text-align:center;font-size:21px;transform:scaleX(.9);color:#555">13</div>
<div class="a" style="left:0;top:597px;width:54px;height:29px;line-height:29px;text-align:center;font-size:21px;transform:scaleX(.9);color:#555">14</div>
<div class="a" style="left:0;top:626px;width:54px;height:29px;line-height:29px;text-align:center;font-size:21px;transform:scaleX(.9);color:#555">15</div>
<div class="a" style="left:0;top:655px;width:54px;height:29px;line-height:29px;text-align:center;font-size:21px;transform:scaleX(.9);color:#555">16</div>
<div class="a" style="left:0;top:684px;width:54px;height:29px;line-height:29px;text-align:center;font-size:21px;transform:scaleX(.9);color:#555">17</div>
<div class="a" style="left:0;top:713px;width:54px;height:29px;line-height:29px;text-align:center;font-size:21px;transform:scaleX(.9);color:#555">18</div>
<div class="a" style="left:0;top:742px;width:54px;height:29px;line-height:29px;text-align:center;font-size:21px;transform:scaleX(.9);color:#555">19</div>

<!-- cells -->
<div class="cj" style="left:57px;top:223px">产品信息</div>
<div class="cj" style="left:172px;top:223px">产品容量</div>
<div class="cj" style="left:288px;top:223px">产品库存</div>
<div class="lt" style="left:58px;top:253px">A</div>
<div class="num" style="left:168px;top:253px">73</div>
<div class="cj" style="left:288px;top:253px">充足</div>
<div class="lt" style="left:58px;top:282px">B</div>
<div class="num" style="left:168px;top:282px">288</div>
<div class="cj" style="left:288px;top:282px">充足</div>
<div class="lt" style="left:58px;top:311px">C</div>
<div class="num" style="left:168px;top:311px">63</div>
<div class="cj" style="left:288px;top:311px">充足</div>
<div class="lt" style="left:58px;top:340px">D</div>
<div class="num" style="left:168px;top:340px">94</div>
<div class="cj" style="left:288px;top:340px">充足</div>
<div class="lt" style="left:58px;top:369px">E</div>
<div class="num" style="left:168px;top:369px">38</div>
<div class="cj" style="left:288px;top:369px">充足</div>
<div class="lt" style="left:58px;top:398px">F</div>
<div class="num" style="left:168px;top:398px">85</div>
<div class="cj" style="left:288px;top:398px">充足</div>
<div class="lt" style="left:58px;top:427px">G</div>
<div class="num" style="left:168px;top:427px">84</div>
<div class="cj" style="left:288px;top:427px">充足</div>
<div class="lt" style="left:58px;top:456px">H</div>
<div class="num" style="left:168px;top:456px">79</div>
<div class="cj" style="left:288px;top:456px">充足</div>
<div class="lt" style="left:58px;top:485px">I</div>
<div class="num" style="left:168px;top:485px">93</div>
<div class="cj" style="left:288px;top:485px">充足</div>
<!-- dialog -->
<div class="a" style="left:672px;top:191px;width:520px;height:507px;background:#f5f5f5;border:1px solid #d3d4da;border-radius:12px;box-shadow:0 8px 34px rgba(0,0,0,.13)"></div>
<div class="a" style="left:691px;top:209px;font-size:16px;font-weight:bold;color:#222;white-space:nowrap">新建格式规则</div>
<svg style="left:1158px;top:216px" width="12" height="12" viewBox="0 0 12 12" fill="none" stroke="#5d6270" stroke-width="1.15"><path d="M1 1l10 10M11 1L1 11"/></svg>
<div class="a" style="left:692px;top:259px;font-size:13px;font-weight:bold;letter-spacing:.6px;color:#222;white-space:nowrap">选择规则类型(S)</div>
<div class="a" style="left:692px;top:288px;width:480px;height:184px;background:#fff;border:1px solid #dcdcdc;border-radius:4px"></div>
<div class="a" style="left:697px;top:443px;width:470px;height:24px;background:#e8e8e8;border-radius:4px"></div>
<div class="dl" style="top:296px">基于各自值设置所有单元格的格式</div>
<div class="dl" style="top:326px">只为包含以下内容的单元格设置格式</div>
<div class="dl" style="top:356px">仅对排名靠前或靠后的数值设置格式</div>
<div class="dl" style="top:386px">仅对高于或低于平均值的数值设置格式</div>
<div class="dl" style="top:416px">仅对唯一值或重复值设置格式</div>
<div class="dl" style="top:446px">使用公式确定要设置格式的单元格</div>
<div class="a" style="left:692px;top:502px;font-size:13px;font-weight:bold;letter-spacing:.6px;color:#222;white-space:nowrap">编辑规则说明(E)</div>
<div class="a" style="left:694px;top:534px;font-size:12px;color:#222;white-space:nowrap">只为满足以下条件的单元格设置格式(O):</div>
<div class="a" style="left:692px;top:557px;width:480px;height:73px;background:#fff;border:1px solid #dcdcdc;border-radius:4px"></div>
<div class="a" style="left:703px;top:566px;width:458px;height:23px;background:#fff;border:1px solid #d4d4d4;border-radius:3px"></div>
<div class="a" style="left:709px;top:569px;font-size:12px;letter-spacing:.8px;color:#222;white-space:nowrap">=B2&lt;50</div>
<div class="a" style="left:755px;top:570px;width:1px;height:15px;background:#111"></div>
<svg style="left:1138px;top:569px" width="20" height="18" viewBox="0 0 20 18" fill="none" stroke-linejoin="round"><path d="M9.2 14.5H2.3V2.2H15.7V8.4" stroke="#444" stroke-width="1.25"/><path d="M4.6 4.7H13.7V7.5H7.6V12.5H4.6Z" stroke="#555" stroke-width="1"/><path d="M10.8 9.6L16.9 12L13.9 12.7L12.7 15.6Z" stroke="#168a57" stroke-width="1.3"/></svg>
<div class="a" style="left:703px;top:598px;font-size:12px;color:#222;white-space:nowrap">预览</div>
<div class="a" style="left:733px;top:595px;width:150px;height:23px;background:#fff;border:1px solid #e2e2e2;border-radius:4px"></div>
<div class="a" style="left:733px;top:597px;width:150px;text-align:center;font-size:14px;color:#222;white-space:nowrap">未设定格式</div>
<div class="a" style="left:890px;top:595px;width:54px;height:23px;background:#fff;border:1px solid #d6d6d6;border-radius:4px;box-shadow:0 1px 1px rgba(0,0,0,.06)"></div>
<div class="a" style="left:890px;top:598px;width:54px;text-align:center;font-size:12px;color:#222;white-space:nowrap">格式(F)</div>
<svg style="left:701px;top:655px" width="18" height="13" viewBox="0 0 18 13"><defs><linearGradient id="ai" x1="0" y1="1" x2=".6" y2="0"><stop offset="0" stop-color="#2f7bff"/><stop offset="1" stop-color="#6a4dff"/></linearGradient><linearGradient id="ai2" x1="0" y1="0" x2="1" y2="1"><stop offset="0" stop-color="#ff34d6"/><stop offset="1" stop-color="#ff8a70"/></linearGradient></defs><path d="M.8 12L5.8 1h5L5.8 12z" fill="url(#ai)"/><path d="M9.3 5.6h3.3l4 6.4h-3.5z" fill="url(#ai2)"/></svg>
<div class="a" style="left:724px;top:652px;font-size:13px;color:#222;white-space:nowrap">AI 条件格式(A)</div>
<div class="a" style="left:1012px;top:646px;width:74px;height:32px;background:#1f66de;border-radius:5px;color:#fff;font-size:14px;text-align:center;line-height:32px">确定</div>
<div class="a" style="left:1098px;top:646px;width:74px;height:32px;background:#fff;border:1px solid #d4d4d4;border-radius:5px;color:#222;font-size:14px;text-align:center;line-height:30px">取消</div>
<!-- arrows -->
<svg style="left:0;top:0;filter:drop-shadow(2px 2px 1.5px rgba(0,0,0,.45))" width="1286" height="774" viewBox="0 0 1286 774"><line x1="959.6" y1="391.1" x2="916.5" y2="431.5" stroke="#f00" stroke-width="3.2" stroke-linecap="round"/><polygon points="897.6,446.9 913.1,426.3 916.5,431.5 921,434.5" fill="#f00" stroke="#f00" stroke-width="1" stroke-linejoin="round"/><line x1="845.5" y1="536.7" x2="793.4" y2="562.2" stroke="#f00" stroke-width="3.2" stroke-linecap="round"/><polygon points="770.9,573.2 791.1,557.7 793.4,562.2 796.2,567.4" fill="#f00" stroke="#f00" stroke-width="1" stroke-linejoin="round"/><line x1="1013.7" y1="537.2" x2="960.2" y2="586.5" stroke="#f00" stroke-width="3.2" stroke-linecap="round"/><polygon points="941.6,601.7 957.3,581.7 960.2,586.5 964.3,589.2" fill="#f00" stroke="#f00" stroke-width="1" stroke-linejoin="round"/></svg>
<!-- watermark -->
<svg style="left:1124px;top:722px" width="50" height="44" viewBox="0 0 50 44"><defs>
<linearGradient id="sw1" x1="0" y1="0" x2="1" y2="0"><stop offset="0" stop-color="#4a86d8"/><stop offset="1" stop-color="#6ec0f0"/></linearGradient>
<linearGradient id="sw2" x1="0" y1="0" x2="1" y2="1"><stop offset="0" stop-color="#3fb36a"/><stop offset="1" stop-color="#9ad24a"/></linearGradient>
<linearGradient id="sw3" x1="0" y1="0" x2="1" y2="0"><stop offset="0" stop-color="#f3e86a"/><stop offset="1" stop-color="#c8e06a"/></linearGradient></defs>
<path d="M46 2C30 3 10 10 4 22c-4 8 2 14 10 13C7 32 6 24 12 18 20 9 36 4 46 2z" fill="url(#sw1)"/>
<path d="M10 26c2-5 9-8 16-6-5 0-10 2-11 6-1 3 3 5 8 3-5 4-13 3-13-3z" fill="#5a8fd8"/>
<path d="M22 20c8-4 22-5 22 3 0 9-16 17-30 16 14-3 24-9 23-15-1-4-8-5-15-4z" fill="url(#sw2)"/>
<path d="M12 41c8 1 20-2 28-6-8 5-18 8-27 8z" fill="url(#sw3)"/>
</svg>
<div class="a" style="left:1169px;top:720px;font-size:19.5px;font-weight:bold;color:#6095d8;-webkit-text-stroke:.6px #6095d8;white-space:nowrap;letter-spacing:1.8px">极光下载站</div>
<div class="a" style="left:1171px;top:748px;font-size:13px;font-weight:bold;color:#6cc88a;white-space:nowrap">www.x</div>
<div class="a" style="left:1218px;top:741px;font-size:20px;font-weight:bold;color:#9a7850;-webkit-text-stroke:.7px #9a7850;white-space:nowrap">全攻略</div>
</body>
</html>
